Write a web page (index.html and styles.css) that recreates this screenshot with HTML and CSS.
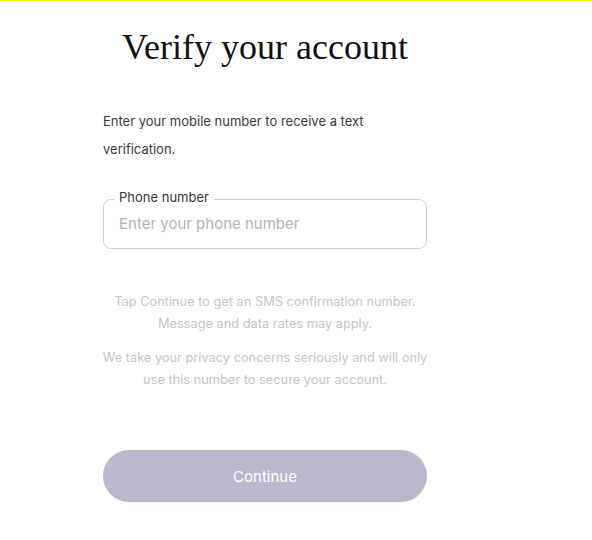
FILE: index.html
```html
<!DOCTYPE html>
<html>
<head>
<meta charset="utf-8">
<link rel="stylesheet" href="styles.css">
</head>
<body>
<div class="topbar"></div>
<main class="panel">
  <h1 class="title">Verify your account</h1>
  <p class="intro">Enter your mobile number to receive a text verification.</p>
  <fieldset class="field">
    <legend class="field-label">Phone number</legend>
    <input class="field-input" type="tel" placeholder="Enter your phone number">
  </fieldset>
  <div class="notes">
    <p class="note">Tap Continue to get an SMS confirmation number.<br>Message and data rates may apply.</p>
    <p class="note">We take your privacy concerns seriously and will only<br>use this number to secure your account.</p>
  </div>
  <button class="continue" type="button">Continue</button>
</main>
</body>
</html>
```
FILE: styles.css
```css
html, body {
  margin: 0;
  padding: 0;
  background: #ffffff;
}
body {
  font-family: Inter, "Noto Sans", sans-serif;
  color: #333;
}
.topbar {
  height: 1px;
  background: #ffff00;
}
.panel {
  width: 324px;
  margin-left: 103px;
  display: flex;
  flex-direction: column;
}
.title {
  margin: 24px 0 0;
  font-family: "Liberation Serif", serif;
  font-weight: 400;
  font-size: 36px;
  line-height: 44px;
  text-align: center;
  color: #111;
}
.intro {
  margin: 38px 0 0;
  width: 280px;
  font-size: 13px;
  line-height: 28px;
  color: #3a3a3a;
}
.field {
  margin: 27px 0 0;
  padding: 0 15px;
  border: 1px solid #cfcfcf;
  border-radius: 8px;
  height: 59px;
  box-sizing: border-box;
  min-width: 0;
}
.field-label {
  padding: 0 5px 4px;
  margin-left: -5px;
  font-size: 13px;
  line-height: 14px;
  color: #333;
}
.field-input {
  display: block;
  border: none;
  outline: none;
  padding: 0;
  margin: 6px 0 0;
  width: 100%;
  font-family: inherit;
  font-size: 15px;
  line-height: 20px;
  color: #333;
  background: transparent;
}
.field-input::placeholder {
  color: #b3b3b3;
}
.notes {
  margin: 42px -20px 0;
  display: flex;
  flex-direction: column;
  gap: 12px;
}
.note {
  margin: 0;
  text-align: center;
  white-space: nowrap;
  font-size: 12.8px;
  line-height: 22px;
  color: #c4c4c4;
}
.continue {
  margin-top: 59px;
  height: 52px;
  border: none;
  border-radius: 26px;
  background: #bab8cc;
  color: #fff;
  font-family: inherit;
  font-size: 15px;
}
```
